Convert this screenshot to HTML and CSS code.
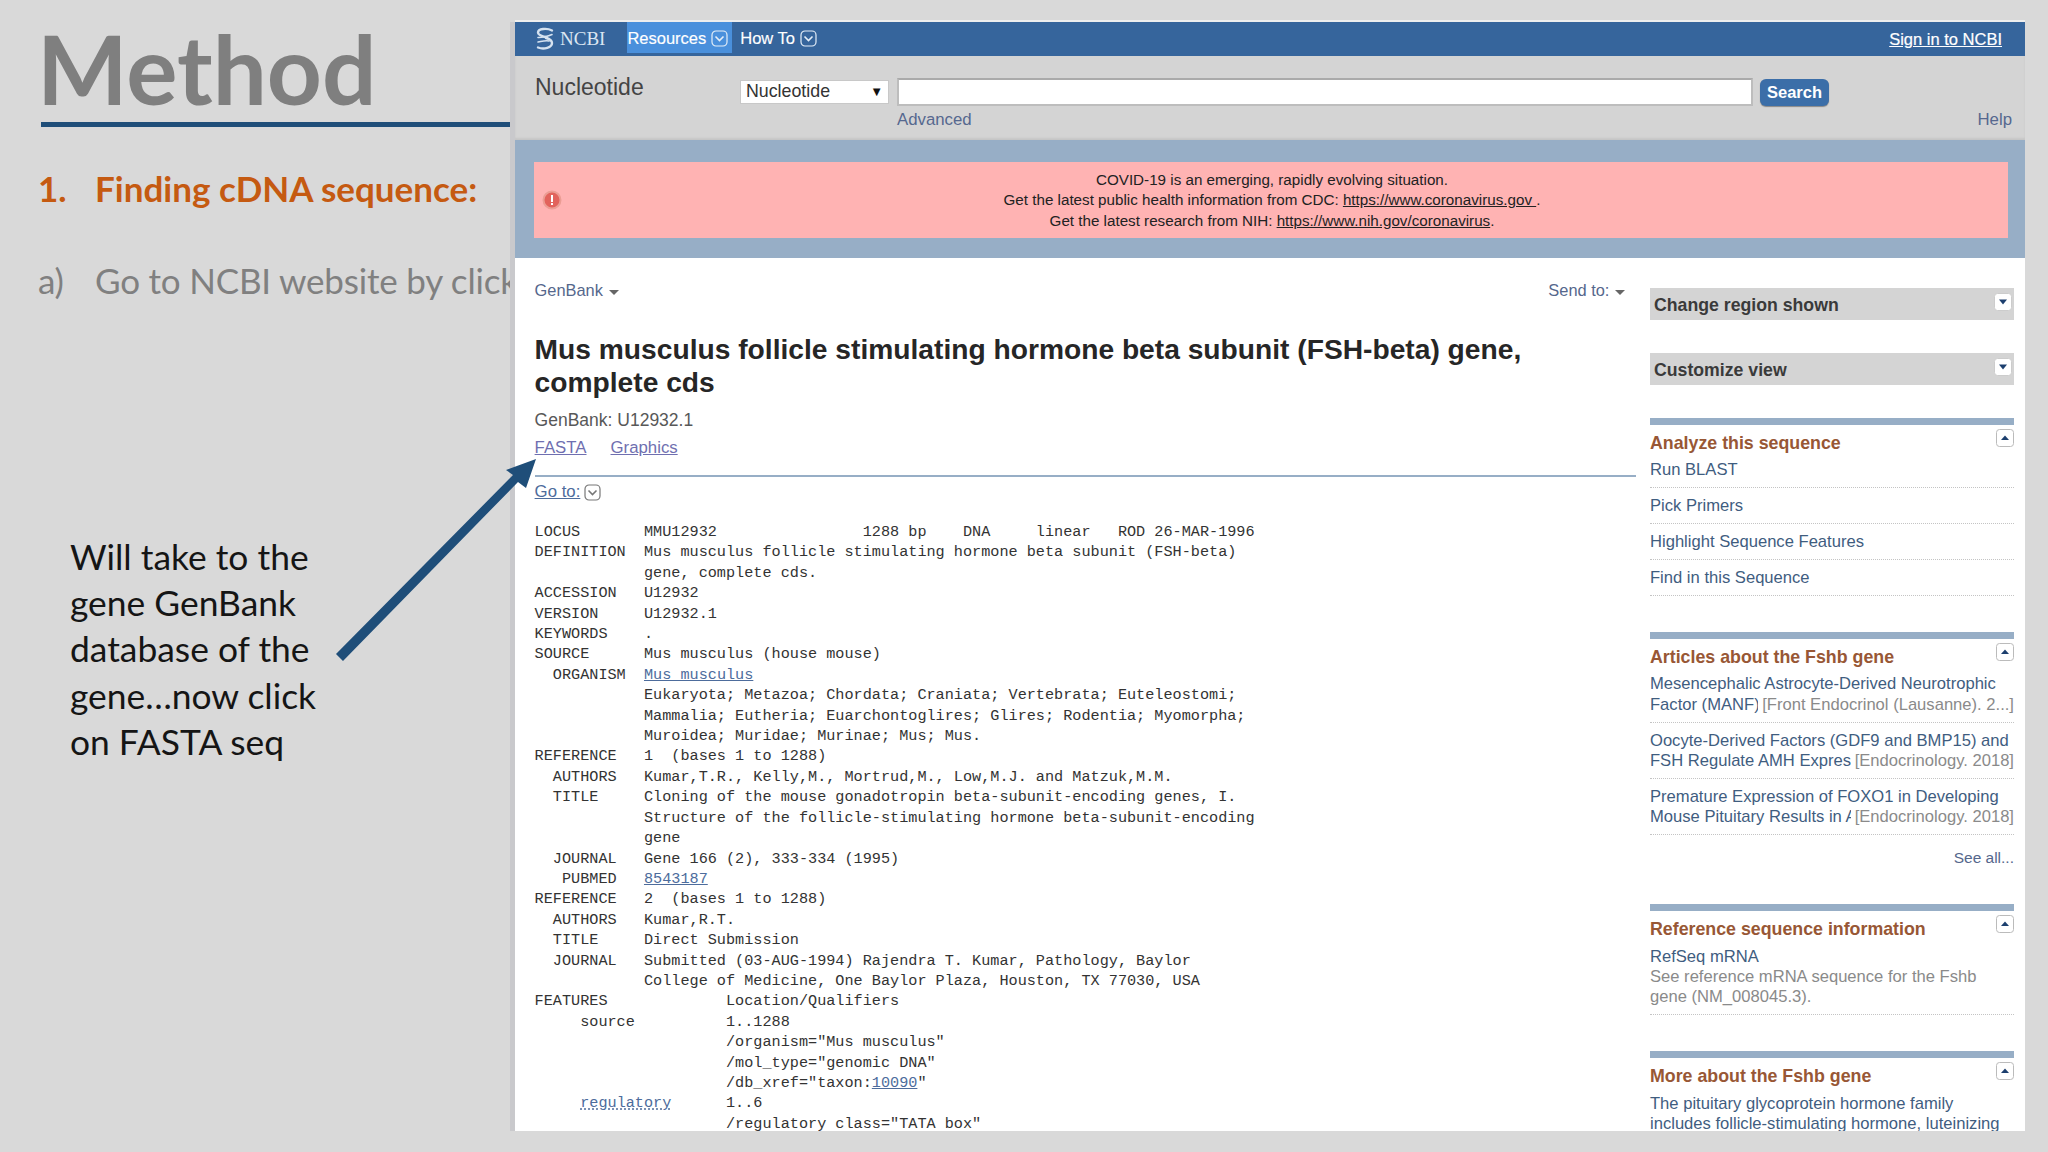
FILE: index.html
```html
<!DOCTYPE html>
<html lang="en">
<head>
<meta charset="utf-8">
<title>Method</title>
<link rel="stylesheet" href="styles.css">
</head>
<body>
<svg class="defs" width="0" height="0" aria-hidden="true">
  <symbol id="chev" viewBox="0 0 17 17"><rect x="1" y="1" width="15" height="15" rx="4" fill="none" stroke="currentColor" stroke-width="1.2"/><path d="M4.5 6.5 8.5 10.5 12.5 6.5" fill="none" stroke="currentColor" stroke-width="1.6"/></symbol>
  <symbol id="up" viewBox="0 0 18 18"><rect x=".5" y=".5" width="17" height="17" rx="3" fill="#fff" stroke="#bbb"/><path d="M5 11 9 6.5 13 11Z" fill="#1c3f6e"/></symbol>
  <symbol id="down" viewBox="0 0 18 18"><rect x=".5" y=".5" width="17" height="17" rx="3" fill="#fff" stroke="#ccc"/><path d="M5 6.500 9 11.500 13 6.500Z" fill="#1c3f6e"/></symbol>
</svg>
<div class="slide">
  <section class="left">
    <h1 class="slide-title">Method</h1>
    <div class="slide-rule"></div>
    <div class="step"><span class="num">1.</span><span>Finding cDNA sequence:</span></div>
    <div class="sub"><span class="num">a)</span><span>Go to NCBI website by clicking on the link</span></div>
    <p class="note">Will take to the<br>gene GenBank<br>database of the<br>gene…now click<br>on FASTA seq</p>
  </section>
  <main class="window">
    <header class="topbar">
      <svg class="logo" viewBox="0 0 20 24" width="20" height="24" aria-hidden="true"><g fill="none" stroke="#d5e2f0" stroke-linecap="round"><path d="M17 3.500C12 .8 3 1.500 3 5.500c0 3 5 4 9 5" stroke-width="2.400"/><path d="M3 10.500c3 .2 10-1 14-3" stroke-width="1.600"/><path d="M11 11c3 .8 6 2 6 5 0 4.500-8 7-14 4.500" stroke-width="2.400"/><path d="M3 15c3-1 9-1.500 11-1" stroke-width="1.600"/></g></svg>
      <span class="brand">NCBI</span>
      <span class="menu active">Resources <svg class="chev" width="17" height="17"><use href="#chev"/></svg></span>
      <span class="menu">How To <svg class="chev" width="17" height="17"><use href="#chev"/></svg></span>
      <a class="signin">Sign in to NCBI</a>
    </header>
    <div class="searchbar">
      <span class="db-name">Nucleotide</span>
      <div class="search-col">
        <div class="search-row">
          <div class="select"><span>Nucleotide</span><span class="select-arrow">▼</span></div>
          <div class="input"></div>
          <div class="btn">Search</div>
        </div>
        <div class="search-links"><a>Advanced</a><a>Help</a></div>
      </div>
    </div>
    <div class="band">
      <div class="alert">
        <svg class="alert-icon" width="20" height="20" viewBox="0 0 20 20" aria-hidden="true"><circle cx="10" cy="10" r="8.500" fill="#e2635c" stroke="#eb9d94" stroke-width="2"/><rect x="9" y="5" width="2" height="7" fill="#fff"/><rect x="9" y="13" width="2" height="2" fill="#fff"/></svg>
        <div class="alert-text">
          <div>COVID-19 is an emerging, rapidly evolving situation.</div>
          <div>Get the latest public health information from CDC: <u>https://www.coronavirus.gov </u>.</div>
          <div>Get the latest research from NIH: <u>https://www.nih.gov/coronavirus</u>.</div>
        </div>
      </div>
    </div>
    <div class="content">
      <article class="record">
        <div class="rec-top"><span>GenBank <i class="caret"></i></span><span>Send to: <i class="caret"></i></span></div>
        <h2 class="rec-title">Mus musculus follicle stimulating hormone beta subunit (FSH-beta) gene, complete cds</h2>
        <div class="rec-id">GenBank: U12932.1</div>
        <div class="rec-links"><a>FASTA</a><a>Graphics</a></div>
        <div class="goto"><a>Go to:</a> <svg class="goto-icon" width="17" height="17"><use href="#chev"/></svg></div>
<pre class="flat">LOCUS       MMU12932                1288 bp    DNA     linear   ROD 26-MAR-1996
DEFINITION  Mus musculus follicle stimulating hormone beta subunit (FSH-beta)
            gene, complete cds.
ACCESSION   U12932
VERSION     U12932.1
KEYWORDS    .
SOURCE      Mus musculus (house mouse)
  ORGANISM  <a>Mus musculus</a>
            Eukaryota; Metazoa; Chordata; Craniata; Vertebrata; Euteleostomi;
            Mammalia; Eutheria; Euarchontoglires; Glires; Rodentia; Myomorpha;
            Muroidea; Muridae; Murinae; Mus; Mus.
REFERENCE   1  (bases 1 to 1288)
  AUTHORS   Kumar,T.R., Kelly,M., Mortrud,M., Low,M.J. and Matzuk,M.M.
  TITLE     Cloning of the mouse gonadotropin beta-subunit-encoding genes, I.
            Structure of the follicle-stimulating hormone beta-subunit-encoding
            gene
  JOURNAL   Gene 166 (2), 333-334 (1995)
   PUBMED   <a>8543187</a>
REFERENCE   2  (bases 1 to 1288)
  AUTHORS   Kumar,R.T.
  TITLE     Direct Submission
  JOURNAL   Submitted (03-AUG-1994) Rajendra T. Kumar, Pathology, Baylor
            College of Medicine, One Baylor Plaza, Houston, TX 77030, USA
FEATURES             Location/Qualifiers
     source          1..1288
                     /organism="Mus musculus"
                     /mol_type="genomic DNA"
                     /db_xref="taxon:<a>10090</a>"
     <a class="dotted">regulatory</a>      1..6
                     /regulatory class="TATA box"</pre>
      </article>
      <aside class="side">
        <div class="panel">Change region shown <svg class="tog" width="18" height="18"><use href="#down"/></svg></div>
        <div class="panel">Customize view <svg class="tog" width="18" height="18"><use href="#down"/></svg></div>
        <section class="box">
          <h3>Analyze this sequence</h3><svg class="tog-up" width="18" height="18"><use href="#up"/></svg>
          <div class="row">Run BLAST</div>
          <div class="row">Pick Primers</div>
          <div class="row">Highlight Sequence Features</div>
          <div class="row">Find in this Sequence</div>
        </section>
        <section class="box">
          <h3>Articles about the Fshb gene</h3><svg class="tog-up" width="18" height="18"><use href="#up"/></svg>
          <div class="row"><div>Mesencephalic Astrocyte-Derived Neurotrophic</div><div class="cut"><span class="clip">Factor (MANF)</span><span class="src">[Front Endocrinol (Lausanne). 2...]</span></div></div>
          <div class="row"><div>Oocyte-Derived Factors (GDF9 and BMP15) and</div><div class="cut"><span class="clip">FSH Regulate AMH Expression</span><span class="src">[Endocrinology. 2018]</span></div></div>
          <div class="row"><div>Premature Expression of FOXO1 in Developing</div><div class="cut"><span class="clip">Mouse Pituitary Results in Altered</span><span class="src">[Endocrinology. 2018]</span></div></div>
          <div class="seeall">See all...</div>
        </section>
        <section class="box">
          <h3>Reference sequence information</h3><svg class="tog-up" width="18" height="18"><use href="#up"/></svg>
          <div class="row">RefSeq mRNA<div class="desc">See reference mRNA sequence for the Fshb gene (NM_008045.3).</div></div>
        </section>
        <section class="box">
          <h3>More about the Fshb gene</h3><svg class="tog-up" width="18" height="18"><use href="#up"/></svg>
          <div class="row">The pituitary glycoprotein hormone family includes follicle-stimulating hormone, luteinizing</div>
        </section>
      </aside>
    </div>
  </main>
  <svg class="arrow" width="2048" height="1152" viewBox="0 0 2048 1152" aria-hidden="true"><polygon points="336,654 343,661 518,482 526,488 536,459 506,470 513,475" fill="#1f4e79"/></svg>
</div>
</body>
</html>
```
FILE: styles.css
```css
* { box-sizing: border-box; }
html, body { margin: 0; padding: 0; }
body { width: 2048px; height: 1152px; overflow: hidden; background: #d9d9d9; font-family: "Liberation Sans", Arial, sans-serif; }
.defs { position: absolute; }
a { cursor: pointer; }

.slide { position: relative; display: flex; width: 2048px; height: 1152px; }
.arrow { position: absolute; left: 0; top: 0; pointer-events: none; }

/* Left column of the slide */
.left { width: 510px; height: 1152px; overflow: hidden; flex: none; font-family: Lato, "Open Sans", sans-serif; }
.slide-title { margin: 0; padding: 14px 0 0 37px; font-size: 96px; line-height: 107px; font-weight: 700; color: #7f7f7f; }
.slide-rule { margin: 1px 0 -1px 41px; height: 5px; background: #1f4e79; }
.step, .sub { display: flex; white-space: nowrap; padding-left: 38px; }
.num { width: 57px; flex: none; }
.step { margin-top: 39px; font-size: 35px; line-height: 46px; font-weight: 700; color: #c55a11; }
.sub { margin-top: 46px; font-size: 35px; letter-spacing: -.2px; line-height: 46px; color: #808080; }
.note { margin: 231px 0 0 70px; font-size: 35.400px; line-height: 46.200px; color: #151515; }

/* NCBI window */
.window { width: 1510px; height: 1109px; margin: 22px 0 0 5px; flex: none; overflow: hidden; background: #fff; box-shadow: -5px 0 0 #c9c9cc, 0 -2px 0 #eee; display: flex; flex-direction: column; }
.topbar { height: 34px; flex: none; display: flex; align-items: center; background: #36659c; color: #fff; padding-left: 20px; font-size: 16.500px; }
.logo { flex: none; }
.brand { margin: 0 22px 0 5px; font-family: "Liberation Serif", serif; font-size: 19px; color: #dbe6f2; }
.menu { display: flex; align-items: center; gap: 5px; height: 31px; align-self: flex-start; padding: 2px 4px 0 0; margin-right: 8px; -webkit-text-stroke: .15px #fff; white-space: nowrap; }
.menu.active { background: #4a90dc; }
.chev { color: #e4eef8; }
.signin { margin-left: auto; margin-right: 23px; text-decoration: underline; font-size: 16.500px; -webkit-text-stroke: .2px #fff; }

.searchbar { height: 84px; flex: none; display: flex; background: #d4d4d4; padding: 0 13px 0 20px; box-shadow: inset 0 -2px 2px #c6c6c6; }
.db-name { width: 205px; flex: none; padding-top: 17px; font-size: 23px; line-height: 28px; color: #444; }
.search-col { flex: 1; padding-top: 22px; }
.search-row { display: flex; align-items: center; height: 27px; }
.select { width: 149px; height: 24px; display: flex; align-items: center; justify-content: space-between; padding: 0 5px 0 5px; margin-right: 8px; background: #fff; border: 1px solid #c8c8c8; font-size: 17.800px; color: #333; }
.select-arrow { font-size: 13px; color: #111; }
.input { width: 856px; height: 28px; background: #fff; border: 2px solid #bdbdbd; border-top-color: #aaa; margin-right: 7px; }
.btn { width: 69px; height: 27px; margin-top: 1px; border-radius: 6px; background: #3b6ea8; color: #fff; font-size: 16.500px; font-weight: 700; text-align: center; line-height: 27px; box-shadow: 0 1px 1px #888; }
.search-links { display: flex; justify-content: space-between; padding-left: 157px; margin-top: 4px; font-size: 16.800px; line-height: 22px; color: #56688f; }

.band { height: 118px; flex: none; background: #97aec6; padding: 22px 17px 20px 19px; }
.alert { height: 76px; background: #ffb3b3; display: flex; align-items: center; padding-left: 8px; }
.alert-icon { flex: none; }
.alert-text { flex: 1; padding: 1px 26px 0 0; text-align: center; font-size: 15.200px; line-height: 20.500px; color: #222; }

.content { flex: 1; min-height: 0; display: flex; padding-left: 19.600px; }
.record { width: 1101.400px; flex: none; margin-right: 14px; }
.rec-top { display: flex; justify-content: space-between; padding: 22px 11px 0 0; font-size: 16.400px; line-height: 20px; color: #55678c; }
.caret { display: inline-block; width: 0; height: 0; margin-left: 1px; vertical-align: 1px; border: 5px solid transparent; border-top-color: #666; border-bottom: 0; }
.rec-title { margin: 33px 0 0; font-size: 28.200px; line-height: 33px; font-weight: 700; color: #262626; }
.rec-id { margin-top: 10.500px; font-size: 17.500px; line-height: 20px; color: #585858; }
.rec-links { display: flex; gap: 24px; margin-top: 8px; font-size: 16.800px; line-height: 20px; color: #6f6fb0; }
.rec-links a { text-decoration: underline; }
.goto { display: flex; align-items: center; gap: 4px; margin-top: 17px; padding-top: 0; height: 33px; border-top: 2px solid #97aec6; font-size: 16.800px; color: #4d6c9c; }
.goto a { text-decoration: underline; }
.goto-icon { color: #777; }
.flat { margin: 14.500px 0 0; font-family: "Liberation Mono", monospace; font-size: 15.200px; line-height: 20.400px; color: #333; }
.flat a { color: #4d6c9c; text-decoration: underline; }
.flat a.dotted { text-decoration-style: dotted; }

.side { width: 364px; flex: none; padding-top: 30px; font-size: 16.600px; line-height: 20.300px; color: #3f5d7f; }
.panel { position: relative; height: 32px; margin-bottom: 33px; padding: 1px 0 0 4px; background: #d4d4d4; font-size: 17.700px; line-height: 32px; font-weight: 700; color: #3a3a3a; }
.tog { position: absolute; right: 2px; top: 5px; }
.box { position: relative; border-top: 7px solid #97aec6; margin-bottom: 36px; }
.box h3 { margin: 8px 0 7px; font-size: 17.800px; line-height: 20.400px; font-weight: 700; color: #985735; }
.tog-up { position: absolute; right: 0; top: 4px; }
.row { padding: 8px 0 6.600px; border-bottom: 1px dotted #c4c4c4; }
.box h3 + svg + .row { padding-top: 0; }
.cut { display: flex; justify-content: space-between; white-space: nowrap; }
.clip { flex: 1; min-width: 0; overflow: hidden; }
.src { flex: none; margin-left: 4px; color: #8a8a8a; }
.desc { color: #8a8a8a; }
.seeall { padding-top: 13px; text-align: right; font-size: 15.500px; color: #55678c; margin-bottom: 1px; }
```
